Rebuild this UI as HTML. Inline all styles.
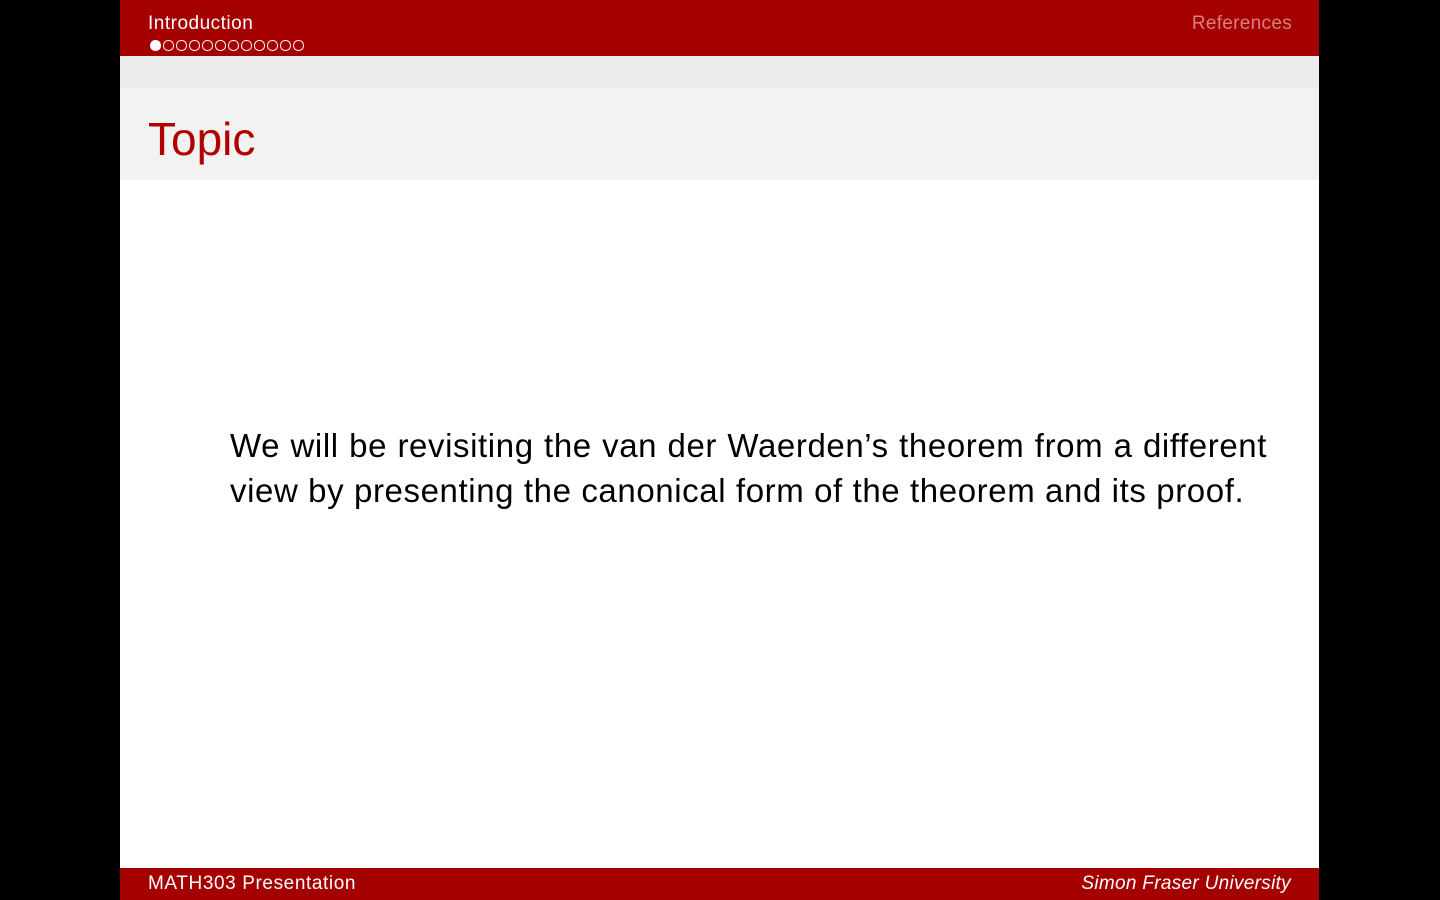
<!DOCTYPE html>
<html><head><meta charset="utf-8"><style>
body{margin:0;width:1440px;height:900px;background:#000;position:relative;font-family:"Liberation Sans",sans-serif;overflow:hidden}
.s{position:absolute;left:120px;top:0;width:1199px;height:900px;background:#fff}
.hd{position:absolute;left:0;top:0;width:1199px;height:56px;background:#a50000}
.b1{position:absolute;left:0;top:56px;width:1199px;height:32px;background:#ebebeb}
.b2{position:absolute;left:0;top:88px;width:1199px;height:92px;background:#f2f2f2}
.ft{position:absolute;left:0;top:868px;width:1199px;height:32px;background:#a50000;color:#fff;font-size:19px}
.t{position:absolute;color:#fff;font-size:19px}
.dots{position:absolute;left:30px;top:40px;display:flex;gap:2.5px}
.dots span{width:8.5px;height:8.5px;border:1.5px solid #fff;border-radius:50%}
.dots span:first-child{background:#fff}
p{position:absolute;left:110px;top:423px;width:1037px;margin:0;font-size:33px;line-height:45px;text-align:justify;text-align-last:left;color:#000;letter-spacing:0.6px}
</style></head><body><div class="s">
<div class="hd"><div class="t" style="left:28px;top:13px;letter-spacing:0.5px">Introduction</div>
<div class="dots"><span></span><span></span><span></span><span></span><span></span><span></span><span></span><span></span><span></span><span></span><span></span><span></span></div>
<div class="t" style="right:27px;top:13px;color:#d88080;letter-spacing:0.3px">References</div></div>
<div class="b1"></div><div class="b2"><div style="position:absolute;left:28px;top:24px;font-size:46px;color:#b00000">Topic</div></div>
<p>We will be revisiting the van der Waerden’s theorem from a different view by presenting the canonical form of the theorem and its proof.</p>
<div class="ft"><span style="position:absolute;left:28px;top:5px;letter-spacing:0.6px">MATH303 Presentation</span><span style="position:absolute;right:28px;top:5px;font-style:italic;letter-spacing:0.3px">Simon Fraser University</span></div>
</div></body></html>
